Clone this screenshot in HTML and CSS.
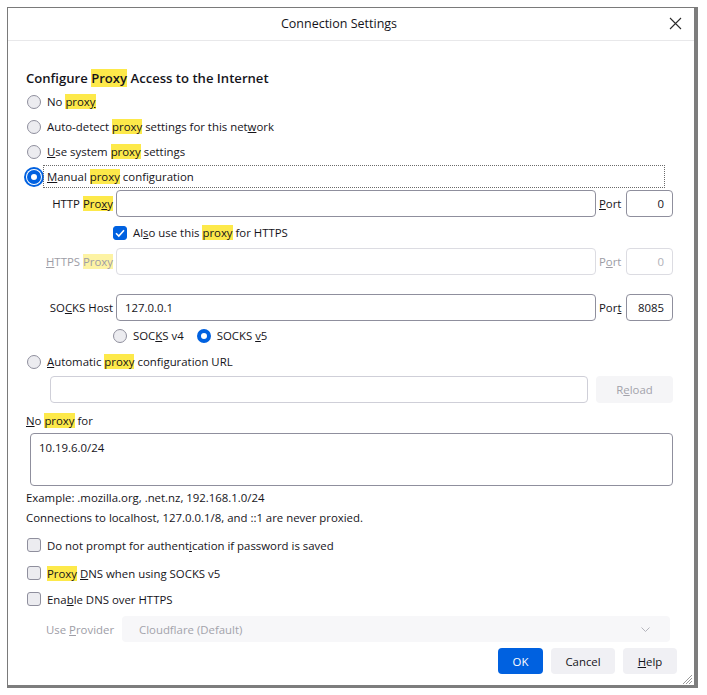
FILE: index.html
```html
<!DOCTYPE html>
<html>
<head>
<meta charset="utf-8">
<link rel="stylesheet" href="styles.css">
</head>
<body>
<div class="window">
  <div class="titlebar">
    <span class="title">Connection Settings</span>
    <svg class="close" width="13" height="13" viewBox="0 0 13 13"><path d="M1 1 L12 12 M12 1 L1 12" stroke="#2b2b2b" stroke-width="1.1" fill="none"/></svg>
  </div>
  <div class="content">
    <div class="heading">Configure <mark>Proxy</mark> Access to the Internet</div>
    <div class="radio-row"><span class="radio"></span><span>No <mark>prox<u>y</u></mark></span></div>
    <div class="radio-row"><span class="radio"></span><span>Auto-detect <mark>proxy</mark> settings for this net<u>w</u>ork</span></div>
    <div class="radio-row"><span class="radio"></span><span><u>U</u>se system <mark>proxy</mark> settings</span></div>
    <div class="radio-row"><span class="radio on focus"></span><span class="focus-label"><u>M</u>anual <mark>proxy</mark> configuration</span></div>

    <div class="proxy-grid">
      <label class="field-label">HTTP <mark>Pro<u>x</u>y</mark></label>
      <div class="input"></div>
      <label class="port-label"><u>P</u>ort</label>
      <div class="input port">0</div>

      <div class="check-cell">
        <span class="checkbox checked"><svg width="14" height="14" viewBox="0 0 14 14"><path d="M3 7.2 L5.8 10 L11 4.2" stroke="#fff" stroke-width="1.6" fill="none"/></svg></span>
        <span>Al<u>s</u>o use this <mark>proxy</mark> for HTTPS</span>
      </div>

      <label class="field-label disabled"><u>H</u>TTPS <mark>Proxy</mark></label>
      <div class="input disabled"></div>
      <label class="port-label disabled">P<u>o</u>rt</label>
      <div class="input port disabled">0</div>

      <div class="spacer"></div>

      <label class="field-label">SO<u>C</u>KS Host</label>
      <div class="input">127.0.0.1</div>
      <label class="port-label">Por<u>t</u></label>
      <div class="input port">8085</div>

      <div class="socks-version">
        <span class="radio"></span><span class="sv-text">SOC<u>K</u>S v4</span>
        <span class="radio on"></span><span>SOCKS <u>v</u>5</span>
      </div>
    </div>

    <div class="radio-row"><span class="radio"></span><span><u>A</u>utomatic <mark>proxy</mark> configuration URL</span></div>
    <div class="url-row">
      <div class="input url"></div>
      <div class="btn reload">R<u>e</u>load</div>
    </div>

    <div class="line noproxy-label"><u>N</u>o <mark>proxy</mark> for</div>
    <div class="textarea">10.19.6.0/24</div>
    <div class="line example">Example: .mozilla.org, .net.nz, 192.168.1.0/24</div>
    <div class="line connections">Connections to localhost, 127.0.0.1/8, and ::1 are never proxied.</div>

    <div class="check-row c1"><span class="checkbox"></span><span>Do not prompt for authent<u>i</u>cation if password is saved</span></div>
    <div class="check-row c2"><span class="checkbox"></span><span><mark>Proxy</mark> <u>D</u>NS when using SOCKS v5</span></div>
    <div class="check-row c3"><span class="checkbox"></span><span>Ena<u>b</u>le DNS over HTTPS</span></div>

    <div class="provider-row">
      <span class="provider-label">Use <u>P</u>rovider</span>
      <div class="select">
        <span>Cloudflare (Default)</span>
        <svg width="9" height="5" viewBox="0 0 9 5"><path d="M0.5 0.5 L4.5 4.5 L8.5 0.5" stroke="#b4b4bc" stroke-width="1" fill="none"/></svg>
      </div>
    </div>

    <div class="buttons">
      <div class="btn primary">OK</div>
      <div class="btn cancel">Cancel</div>
      <div class="btn help"><u>H</u>elp</div>
    </div>
  </div>
  <svg class="grip" width="12" height="12" viewBox="0 0 12 12"><path d="M11 2 L2 11 M11 5 L5 11 M11 8 L8 11" stroke="#9a9a9a" stroke-width="1" fill="none"/></svg>
</div>
</body>
</html>
```

FILE: styles.css
```css
* { box-sizing: border-box; }
html, body { margin: 0; padding: 0; background: #ffffff; }
body {
  font-family: "Open Sans", "Noto Sans", sans-serif;
  font-size: 11.4px;
  color: #15141a;
}
mark { background: #fde94a; color: inherit; }
u { text-decoration: underline; text-underline-offset: 1px; }

.window {
  position: relative;
  margin: 7px 0 0 7px;
  width: 691px;
  height: 681px;
  border-left: 1px solid #7a7a7a;
  border-top: 1px solid #7a7a7a;
  border-right: 4px solid #7d7d7d;
  border-bottom: 3px solid #7d7d7d;
  display: flex;
  flex-direction: column;
  background: #fff;
}

.titlebar {
  height: 33px;
  border-bottom: 1px solid #e8e8ea;
  display: flex;
  align-items: center;
  justify-content: center;
  padding-right: 24px;
  position: relative;
}
.title { font-size: 12.5px; line-height: 16px; }
.close { position: absolute; right: 12px; top: 9px; }

.content {
  padding: 29px 21px 0 19px;
  display: flex;
  flex-direction: column;
}

.heading {
  font-size: 13.1px;
  font-weight: 600;
  line-height: 16px;
  height: 16px;
  margin-left: -1px;
}

.radio-row {
  height: 25px;
  display: flex;
  align-items: center;
}
.heading + .radio-row { margin-top: 3px; }

.radio {
  width: 14px;
  height: 14px;
  border-radius: 50%;
  border: 1px solid #8f8f9d;
  background: #ececf0;
  flex: none;
  margin-right: 6px;
}
.radio.on {
  border: 4px solid #0061e0;
  background: #fff;
}
.radio.focus {
  box-shadow: 0 0 0 1px #fff, 0 0 0 3px #0061e0;
}
.focus-label {
  flex: 1;
  height: 21px;
  line-height: 21px;
  margin-left: -3px;
  padding-left: 3px;
  margin-right: 9px;
  outline: 1px dotted #6a6a6a;
}

.proxy-grid {
  margin-top: 1px;
  display: grid;
  grid-template-columns: 86px 480px 24px 47px;
  grid-template-rows: 27px 31px 27px 19px 27px 28px;
  column-gap: 3px;
  align-items: center;
}
.field-label { text-align: right; white-space: nowrap; }
.port-label { white-space: nowrap; }
.disabled { color: #9d9da6; }
.field-label.disabled mark { background: #fdf3a4; color: #9d9da6; }

.input {
  height: 27px;
  border: 1px solid #8f8f9d;
  border-radius: 4px;
  background: #fff;
  line-height: 25px;
  padding: 0 8px;
}
.input.port { text-align: right; }
.input.disabled { border-color: #dcdce2; color: #b0b0b8; }

.check-cell {
  grid-column: 2 / 5;
  display: flex;
  align-items: center;
  margin-left: -3px;
}
.checkbox {
  width: 14px;
  height: 14px;
  border: 1px solid #8f8f9d;
  border-radius: 3px;
  background: #ececf0;
  flex: none;
  margin-right: 6px;
  display: flex;
}
.checkbox.checked {
  background: #0061e0;
  border-color: #0061e0;
}
.checkbox.checked svg { margin: -1px; }

.spacer { grid-column: 1 / 5; }

.socks-version {
  grid-column: 2 / 5;
  display: flex;
  align-items: center;
  margin-left: -3px;
  padding-top: 1px;
}
.socks-version .sv-text { margin-right: 13px; }

.url-row {
  margin-top: 2px;
  margin-left: 23px;
  display: flex;
  gap: 8px;
  height: 27px;
}
.input.url { flex: 1; border-color: #cfcfd8; }
.btn {
  border-radius: 4px;
  display: flex;
  align-items: center;
  justify-content: center;
  font-size: 11.4px;
}
.reload {
  width: 77px;
  background: #f5f5f7;
  color: #a3a3ab;
}

.line { line-height: 16px; height: 16px; margin-left: -1px; }
.noproxy-label { margin-top: 10px; }
.textarea {
  margin-top: 4px;
  margin-left: 3px;
  height: 53px;
  border: 1px solid #8f8f9d;
  border-radius: 4px;
  padding: 6px 8px;
  line-height: 16px;
}
.example { margin-top: 4px; }
.connections { margin-top: 4px; }

.check-row {
  height: 24px;
  display: flex;
  align-items: center;
}
.c1 { margin-top: 7px; }
.c2 { margin-top: 4px; }
.c3 { margin-top: 2px; }

.provider-row {
  margin-top: 5px;
  height: 26px;
  display: flex;
  align-items: center;
  padding-left: 19px;
  margin-right: 3px;
}
.provider-label { width: 76px; color: #9d9da6; }
.select {
  flex: 1;
  height: 26px;
  background: #f7f7f9;
  border-radius: 4px;
  display: flex;
  align-items: center;
  justify-content: space-between;
  padding: 0 20px 0 17px;
  color: #a3a3ab;
}

.buttons {
  margin-top: 6px;
  margin-right: -4px;
  height: 26px;
  display: flex;
  justify-content: flex-end;
  gap: 8px;
}
.buttons .btn { height: 26px; }
.primary { width: 45px; background: #0061e0; color: #fff; }
.cancel { width: 64px; background: #f0f0f4; }
.help { width: 54px; background: #f0f0f4; }

.grip { position: absolute; right: 1px; bottom: 0px; }
```
